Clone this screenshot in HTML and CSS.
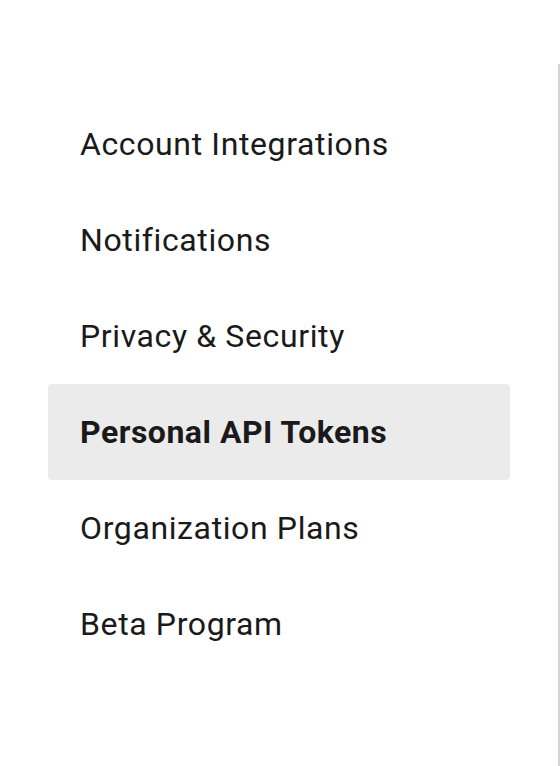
FILE: index.html
```html
<!DOCTYPE html>
<html>
<head>
<meta charset="utf-8">
<link rel="stylesheet" href="styles.css">
</head>
<body>
<nav class="sidebar">
  <ul class="menu">
    <li class="item">Account Integrations</li>
    <li class="item">Notifications</li>
    <li class="item">Privacy &amp; Security</li>
    <li class="item active">Personal API Tokens</li>
    <li class="item">Organization Plans</li>
    <li class="item">Beta Program</li>
  </ul>
</nav>
</body>
</html>
```
FILE: styles.css
```css
html, body {
  margin: 0;
  padding: 0;
  background: #ffffff;
  height: 100%;
}
body {
  font-family: Roboto, "Liberation Sans", sans-serif;
  overflow: hidden;
}
.sidebar {
  box-sizing: border-box;
  width: 560px;
  margin-top: 64px;
  height: 702px;
  border-right: 2px solid #d4d4d4;
  padding: 32px 48px 0 48px;
}
.menu {
  list-style: none;
  margin: 0;
  padding: 0;
}
.item {
  height: 96px;
  display: flex;
  align-items: center;
  padding-left: 32px;
  font-size: 32px;
  line-height: 40px;
  color: #1a1a1a;
  letter-spacing: 0.62px;
  border-radius: 4px;
}
.item.active {
  background: #ebebeb;
  font-weight: 700;
  letter-spacing: 0.5px;
}
```
